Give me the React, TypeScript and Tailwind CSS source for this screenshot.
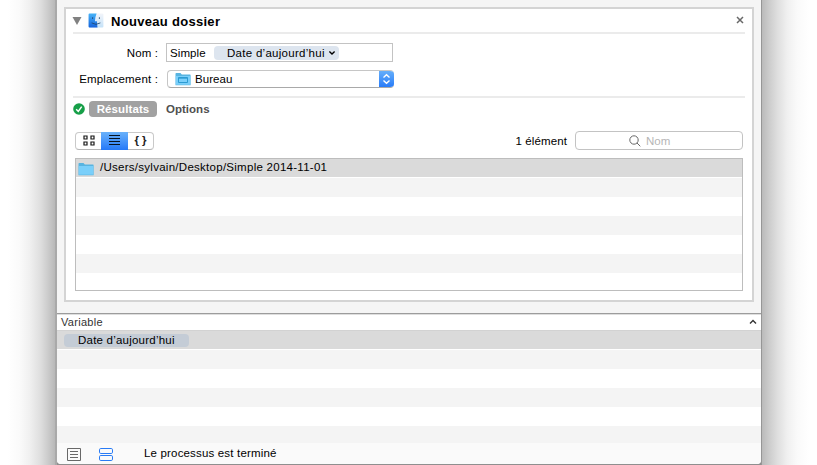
import React from "react";

const Rule = () => <div className="mx-[7px] h-[2px] shrink-0 bg-[#ebebeb]" />;

const Label = ({ children }: { children: React.ReactNode }) => (
  <span className="w-[92px] shrink-0 text-right">{children}</span>
);

const Chevron = ({ className, up }: { className?: string; up?: boolean }) => (
  <svg viewBox="0 0 8 6" className={className} fill="none" stroke="currentColor" strokeWidth="1.4">
    <path d={up ? "M1 4.6 L4 1.6 L7 4.6" : "M1.4 1.6 L4 4 L6.6 1.6"} />
  </svg>
);

const Finder = () => (
  <svg viewBox="0 0 16 16" className="h-4 w-4">
    <defs>
      <linearGradient id="fl" x1="0" y1="0" x2="0" y2="1">
        <stop offset="0" stopColor="#47b4f8" />
        <stop offset="1" stopColor="#1763dc" />
      </linearGradient>
      <linearGradient id="fr" x1="0" y1="0" x2="0" y2="1">
        <stop offset="0" stopColor="#f3f5fa" />
        <stop offset="1" stopColor="#c5e2f8" />
      </linearGradient>
    </defs>
    <rect x="0.6" y="0.4" width="14.8" height="14" rx="1" fill="url(#fr)" />
    <path d="M1.6 .4H8.6Q7 4.1 6.9 8.2H9Q9 11.6 9.5 14.4H1.6Q.6 14.4 .6 13.4V1.4Q.6 .4 1.6 .4Z" fill="url(#fl)" />
    <path d="M4.6 4.2V6M11.4 4.2V6M3.6 9.9Q8 12.8 12.4 9.9" fill="none" stroke="#1d4468" strokeWidth=".8" />
  </svg>
);

const Folder = ({ desk }: { desk?: boolean }) => (
  <svg viewBox="0 0 16 14" className="h-[14px] w-4 shrink-0">
    <path d="M.5 13.2V1.8Q.5 1 1.3 1H5.5L6.8 2.4H15Q15.6 2.4 15.6 3V13.2Z" fill="#58b4e0" />
    <path d="M.8 4H15.3V12.7H.8Z" fill="#7acffa" />
    {desk && <path d="M3.5 5.5H12.5V10.5H3.5ZM3.5 6.2H12.5" fill="none" stroke="#2c9bd2" />}
  </svg>
);

const Row = ({ className }: { className: string }) => <div className={"h-[19px] shrink-0 " + className} />;

export default function App() {
  return (
    <div className="flex h-[465px] w-[817px] overflow-hidden bg-white font-['Liberation_Sans',Arial,sans-serif] text-[11.5px] leading-[14px] text-black">
      <div className="w-[57px] shrink-0 border-r-2 border-[#a9a9a9] bg-[linear-gradient(to_right,#fff_14%,#fafafa_36%,#f0f0f0_54%,#dedede_74%,#cccccc_87%,#b8b8b8_100%)]" />
      <main className="flex w-[704px] shrink-0 flex-col bg-[#8f8f8f]">
        <section className="h-[313px] shrink-0 bg-[#f5f5f5] px-[7px] pt-[7px]">
          <div className="flex h-[295px] w-[690px] flex-col border-2 border-[#d4d4d4] bg-white">
            <header className="flex h-[23px] shrink-0 items-center pr-[8px] pl-[6px]">
              <svg viewBox="0 0 10 8" className="h-2 w-[10px]"><path d="M0.5 0H9.5L5 8Z" fill="#818181" /></svg>
              <span className="ml-[6px]"><Finder /></span>
              <h1 className="ml-[7px] pt-[2px] text-[13px] font-bold tracking-[0.3px]">Nouveau dossier</h1>
              <svg viewBox="0 0 8 8" className="mb-[2px] ml-auto h-2 w-2" stroke="#696969" strokeWidth="1.5"><path d="M1 1L7 7M7 1L1 7" /></svg>
            </header>
            <Rule />
            <div className="flex h-[36px] shrink-0 items-center pt-px">
              <Label><span className="tracking-[0.1px]">Nom :</span></Label>
              <div className="ml-[8px] flex h-[19px] w-[227px] items-center border border-[#c3c3c3] pl-[3px]">
                <span className="tracking-[0.1px]">Simple</span>
                <span className="ml-auto mr-[53px] flex h-[14px] w-[125px] shrink-0 items-center rounded-[4px] bg-[#dde5ef] pl-[13px]">
                  <span className="whitespace-nowrap tracking-[0.28px]">Date d’aujourd’hui</span>
                  <Chevron className="ml-[3px] h-[6px] w-2 shrink-0" />
                </span>
              </div>
            </div>
            <div className="flex h-[18px] shrink-0 items-center">
              <Label><span className="tracking-[0.16px]">Emplacement :</span></Label>
              <div className="ml-[9px] flex h-[18px] w-[227px] items-center overflow-hidden rounded-[4px] border border-r-0 border-[#c6c6c6] border-b-[#a9a9a9] pl-[7px]">
                <Folder desk />
                <span className="ml-[4px] tracking-[0.05px]">Bureau</span>
                <div className="-my-px ml-auto flex h-[18px] w-[15px] items-center justify-center bg-linear-to-b from-[#69b1fa] to-[#2478f8]">
                  <svg viewBox="0 0 9 12" className="h-3 w-[9px]" fill="none" stroke="white" strokeWidth="1.4"><path d="M1.5 4.5L4.5 1.8L7.5 4.5M1.5 7.5L4.5 10.2L7.5 7.5" /></svg>
                </div>
              </div>
            </div>
            <div className="h-[8px] shrink-0" />
            <Rule />
            <div className="flex h-[22px] shrink-0 items-center pl-[7px] font-bold text-[#505050]">
              <svg viewBox="0 0 12 12" className="h-3 w-3"><circle cx="6" cy="6" r="5.8" fill="#169f48" /><path d="M3.2 6.2L5.3 8.4L8.7 3.6" fill="none" stroke="white" strokeWidth="1.5" /></svg>
              <span className="ml-[4px] flex h-4 w-[68px] items-center justify-center rounded-[4px] bg-[#a1a1a1] tracking-[0.1px] text-white">Résultats</span>
              <span className="ml-[9px] tracking-[0.02px]">Options</span>
            </div>
            <div className="mt-[11px] flex h-[19px] shrink-0 items-center pr-[9px] pl-[9px]">
              <div className="flex h-[18px] w-[79px] rounded-[4px] border border-[#c9c9c9] border-b-[#b5b5b5]">
                <div className="flex w-[25px] items-center justify-center">
                  <svg viewBox="0 0 12 11" className="mb-px h-[11px] w-3" fill="none" stroke="#171717" strokeWidth="1.2"><path d="M1 1H4V4H1ZM8 1H11V4H8ZM1 7H4V10H1ZM8 7H11V10H8Z" /></svg>
                </div>
                <div className="-my-px flex h-[18px] w-[27px] items-center justify-center bg-linear-to-b from-[#69b1fa] to-[#2478f8]">
                  <svg viewBox="0 0 11 10" className="mb-[2px] h-[10px] w-[11px]" stroke="#071321"><path d="M0 .5H11M0 3.5H11M0 6.5H11M0 9.5H11" /></svg>
                </div>
                <div className="flex w-[25px] items-center justify-center pb-px pl-[3px] text-[11.5px] font-bold tracking-[3px] text-[#222]">{"{}"}</div>
              </div>
              <span className="ml-auto tracking-[0.12px]">1 élément</span>
              <div className="ml-[8px] flex h-[19px] w-[168px] items-center rounded-[4px] border border-[#c3c3c3] pl-[53px] text-[#b6b6b6]">
                <svg viewBox="0 0 12 12" className="h-3 w-3" fill="none" stroke="#686868"><circle cx="5" cy="5" r="4.2" /><path d="M8 8L11.3 11.3" /></svg>
                <span className="ml-[5px] tracking-[0.05px]">Nom</span>
              </div>
            </div>
            <div className="mx-[9px] mt-[8px] h-[133px] shrink-0 overflow-hidden border border-[#bdbdbd]">
              <div className="flex h-[18px] items-center bg-[#dadada] pl-[2px]">
                <span className="pt-[2px]"><Folder /></span>
                <span className="ml-[6px] pb-[2px] tracking-[0.27px]">/Users/sylvain/Desktop/Simple 2014-11-01</span>
              </div>
              <div className="h-px" />
              <Row className="bg-[#f4f4f4]" />
              <Row className="bg-white" />
              <Row className="bg-[#f4f4f4]" />
              <Row className="bg-white" />
              <Row className="bg-[#f4f4f4]" />
              <Row className="bg-white" />
            </div>
          </div>
        </section>
        <section className="flex h-[151px] shrink-0 flex-col overflow-hidden rounded-b-[4px] border-t border-[#9c9c9c] bg-white">
          <div className="flex h-[17px] shrink-0 items-center border-t border-b border-t-[#dedede] border-b-[#d2d2d2] px-[4px] text-[#333]">
            <span className="pb-px text-[11px] tracking-[0.3px]">Variable</span>
            <Chevron up className="mb-[2px] ml-auto h-[6px] w-2" />
          </div>
          <div className="flex h-[18px] shrink-0 items-center bg-[#dadada] pl-[7px]">
            <span className="flex h-[13px] w-[125px] items-center rounded-[4px] bg-[#c4ccd6] pl-[14px] tracking-[0.22px]">Date d’aujourd’hui</span>
          </div>
          <div className="h-px shrink-0" />
          <Row className="bg-[#f4f4f4]" />
          <Row className="bg-white" />
          <Row className="bg-[#f4f4f4]" />
          <Row className="bg-white" />
          <div className="h-[17px] shrink-0 bg-[#f4f4f4]" />
          <footer className="flex h-[21px] shrink-0 items-center bg-[#fafafa] pl-[10px]">
            <svg viewBox="0 0 14 13" className="mt-px h-[13px] w-[14px]" fill="none" stroke="#686868"><path d="M.5 .5H13.5V12.5H.5ZM3 3.5H11M3 6.5H11M3 9.5H11" /></svg>
            <svg viewBox="0 0 14 14" className="mt-[2px] ml-[18px] h-[14px] w-[14px]" fill="none" stroke="#297bf5"><rect x=".5" y=".5" width="13" height="5" rx="1.3" /><rect x=".5" y="7.5" width="13" height="5" rx="1.3" /></svg>
            <span className="ml-[31px] pb-px tracking-[0.17px]">Le processus est terminé</span>
          </footer>
        </section>
      </main>
      <div className="flex-1 border-l border-[#969696] bg-[linear-gradient(to_left,#fff_14%,#fafafa_36%,#f0f0f0_54%,#dedede_72%,#cccccc_87%,#bababa_100%)]" />
    </div>
  );
}
